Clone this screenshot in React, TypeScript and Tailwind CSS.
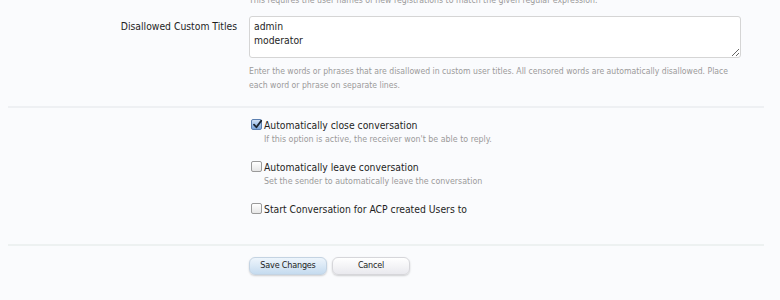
import React from "react";

const font = { fontFamily: '"DejaVu Sans Condensed", "Liberation Sans", sans-serif' };

function Box({ checked }: { checked?: boolean }) {
  if (checked) {
    return (
      <span className="relative mt-[1px] inline-block h-[11px] w-[11px] shrink-0 rounded-[2px] border border-[#5b7fb0] bg-gradient-to-b from-[#cfe0f5] to-[#7da7dc]">
        <svg viewBox="0 0 12 12" className="absolute left-[0px] top-[-1px] h-[11px] w-[11px]">
          <path d="M2.2 6.2 L4.8 9 L10 2" fill="none" stroke="#1d2733" strokeWidth="2" strokeLinecap="round" strokeLinejoin="round" />
        </svg>
      </span>
    );
  }
  return (
    <span className="mt-[1px] inline-block h-[11px] w-[11px] shrink-0 rounded-[2px] border border-[#9a9a9a] bg-gradient-to-b from-white to-[#e6e6e6]" />
  );
}

function Option({ label, hint, checked }: { label: string; hint?: string; checked?: boolean }) {
  return (
    <div className="flex items-start gap-[2px]">
      <Box checked={checked} />
      <div>
        <div className="text-[10.3px] leading-[14px] text-[#1e1e1e]">{label}</div>
        {hint && <div className="mt-[1px] text-[8.8px] leading-[12px] text-[#9a9a9a]">{hint}</div>}
      </div>
    </div>
  );
}

export default function App() {
  return (
    <div className="h-[300px] w-[780px] overflow-hidden bg-[#fafbfd]" style={font}>
      <div className="mt-[-6px] pl-[249px] text-[8.7px] leading-[12px] text-[#9a9a9a]">
        This requires the user names of new registrations to match the given regular expression.
      </div>

      <div className="mt-[10px] flex">
        <div className="w-[237px] pt-[3px] text-right text-[10.3px] leading-[14px] text-[#1e1e1e]">
          Disallowed Custom Titles
        </div>
        <div className="ml-[12px] w-[492px]">
          <textarea
            defaultValue={"admin\nmoderator"}
            className="block h-[42px] w-full resize-y rounded-[3px] border border-[#d5d5d5] bg-white px-[4px] pt-[2px] text-[10.3px] leading-[14px] text-[#1e1e1e] outline-none"
            style={font}
          />
          <div className="mt-[6px] text-[8.6px] leading-[14px] text-[#9a9a9a]">
            Enter the words or phrases that are disallowed in custom user titles. All censored words are automatically disallowed. Place each word or phrase on separate lines.
          </div>
        </div>
      </div>

      <div className="mx-[8px] mt-[14px] h-[2px] w-[756px] bg-[#eef0f3]" />

      <div className="ml-[251px] mt-[10px] flex flex-col gap-[15px]">
        <Option checked label="Automatically close conversation" hint="If this option is active, the receiver won't be able to reply." />
        <Option label="Automatically leave conversation" hint="Set the sender to automatically leave the conversation" />
        <Option label="Start Conversation for ACP created Users to" />
      </div>

      <div className="mx-[8px] mt-[28px] h-[2px] w-[756px] bg-[#edf1f1]" />

      <div className="ml-[249px] mt-[11px] flex gap-[5px]">
        <button className="h-[18px] w-[78px] rounded-[6px] border border-[#c4d3e2] bg-gradient-to-b from-[#eef5fc] to-[#c5dbef] text-[9px] tracking-[-0.2px] text-[#222] shadow-[0_1px_2px_rgba(0,0,0,0.18)]" style={font}>
          Save Changes
        </button>
        <button className="h-[18px] w-[78px] rounded-[6px] border border-[#d6d6da] bg-gradient-to-b from-white to-[#e9e9ee] text-[9px] tracking-[-0.2px] text-[#222] shadow-[0_1px_2px_rgba(0,0,0,0.18)]" style={font}>
          Cancel
        </button>
      </div>
    </div>
  );
}
